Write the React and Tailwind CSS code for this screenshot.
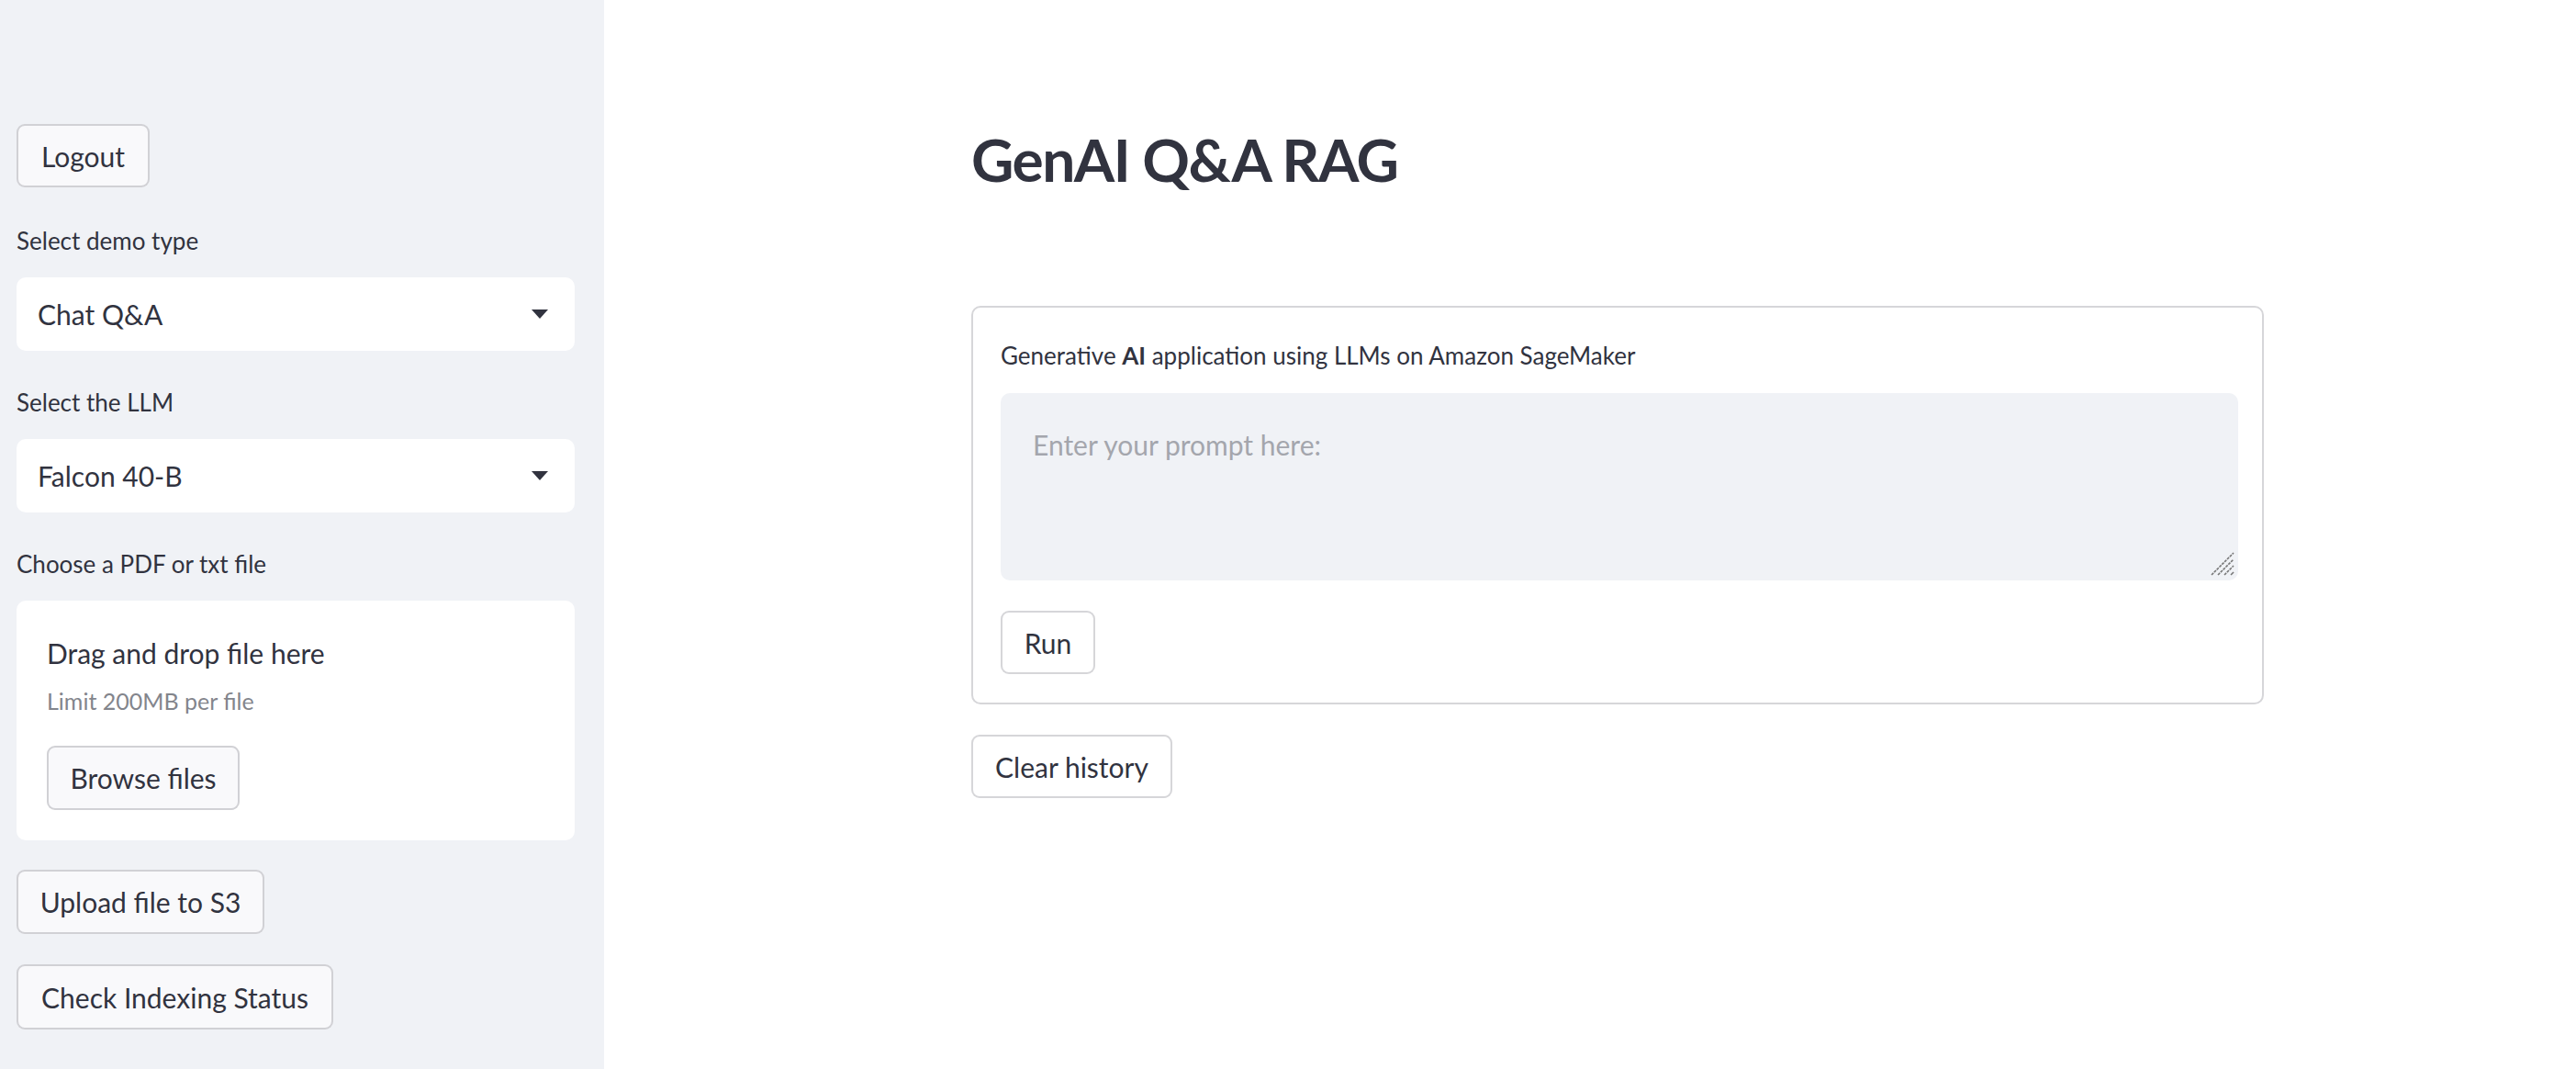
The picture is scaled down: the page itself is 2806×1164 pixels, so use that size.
import React from "react";

function SideButton({ width, height = 70, children, className = "" }) {
  return (
    <button
      type="button"
      className={`flex items-center justify-center rounded-[9px] border-2 border-[rgba(49,51,63,0.2)] bg-[#f9f9fb] text-[30px] leading-[40px] text-[#31333f] ${className}`}
      style={{ width, height }}
    >
      {children}
    </button>
  );
}

function MainButton({ width, children, className = "" }) {
  return (
    <button
      type="button"
      className={`flex h-[69px] items-center justify-center rounded-[9px] border-2 border-[rgba(49,51,63,0.2)] bg-white text-[30px] leading-[40px] text-[#31333f] ${className}`}
      style={{ width }}
    >
      {children}
    </button>
  );
}

function Label({ children, className = "" }) {
  return (
    <div className={`h-[36px] text-[26px] leading-[36px] text-[#31333f] ${className}`}>
      {children}
    </div>
  );
}

function Caret() {
  return (
    <svg width="18" height="10" viewBox="0 0 18 10" aria-hidden="true">
      <polygon points="0,0 18,0 9,10" fill="#31333f" />
    </svg>
  );
}

function SelectBox({ value, className = "" }) {
  return (
    <div
      className={`flex h-[80px] items-center justify-between rounded-[10px] bg-white pl-[23px] pr-[29px] ${className}`}
    >
      <span className="text-[30px] leading-[40px] text-[#31333f]">{value}</span>
      <Caret />
    </div>
  );
}

export default function App() {
  return (
    <div className="flex h-[1164px] w-full overflow-hidden bg-white font-['Lato',sans-serif] text-[#31333f]">
      <aside className="h-[1164px] w-[658px] shrink-0 bg-[#f0f2f6] pl-[18px] pr-[32px] pt-[135px]">
        <SideButton width={145} height={69}>Logout</SideButton>

        <Label className="mt-[40px]">Select demo type</Label>
        <SelectBox value="Chat Q&A" className="mt-[22px]" />

        <Label className="mt-[38px]">Select the LLM</Label>
        <SelectBox value="Falcon 40-B" className="mt-[22px]" />

        <Label className="mt-[38px]">Choose a PDF or txt file</Label>
        <div className="mt-[22px] h-[261px] rounded-[10px] bg-white pl-[33px] pt-[37px]">
          <div className="h-[40px] text-[30px] leading-[40px]">Drag and drop file here</div>
          <div className="mt-[14px] h-[36px] text-[25px] leading-[36px] text-[#83858c]">
            Limit 200MB per file
          </div>
          <SideButton width={210} height={70} className="mt-[31px]">
            Browse files
          </SideButton>
        </div>

        <SideButton width={270} height={70} className="mt-[32px]">
          Upload file to S3
        </SideButton>
        <SideButton width={345} height={71} className="mt-[33px]">
          Check Indexing Status
        </SideButton>
      </aside>

      <main className="flex-1 pl-[400px] pt-[132px]">
        <h1 className="h-[84px] text-[64px] font-bold leading-[84px] tracking-[-1.5px] text-[#31333f]">
          GenAI Q&amp;A RAG
        </h1>

        <form
          className="mt-[117px] w-[1408px] rounded-[10px] border-2 border-[rgba(49,51,63,0.2)] pb-[31px] pl-[30px] pr-[26px] pt-[34px]"
          onSubmit={(e) => e.preventDefault()}
        >
          <div className="h-[36px] text-[26px] leading-[36px]">
            Generative <span className="font-bold">AI</span> application using LLMs on Amazon SageMaker
          </div>
          <div className="relative mt-[23px] h-[204px] w-full">
            <textarea
              className="block h-full w-full resize-none rounded-[10px] bg-[#f0f2f6] pl-[35px] pr-[20px] pt-[36px] text-[30px] leading-[40px] text-[#31333f] outline-none placeholder:text-[#a4a6ad]"
              placeholder="Enter your prompt here:"
            />
            <svg
              className="pointer-events-none absolute bottom-[5px] right-[4px]"
              width="26"
              height="26"
              viewBox="0 0 26 26"
              aria-hidden="true"
            >
              <line x1="1" y1="25" x2="25" y2="1" stroke="#777" strokeWidth="1.6" strokeDasharray="3 1" />
              <line x1="8" y1="25" x2="25" y2="8" stroke="#777" strokeWidth="1.6" strokeDasharray="3 1" />
              <line x1="15" y1="25" x2="25" y2="15" stroke="#777" strokeWidth="1.6" strokeDasharray="3 1" />
              <line x1="22" y1="25" x2="25" y2="22" stroke="#777" strokeWidth="1.6" />
            </svg>
          </div>
          <MainButton width={103} className="mt-[33px]">
            Run
          </MainButton>
        </form>

        <MainButton width={219} className="mt-[33px]">
          Clear history
        </MainButton>
      </main>
    </div>
  );
}
